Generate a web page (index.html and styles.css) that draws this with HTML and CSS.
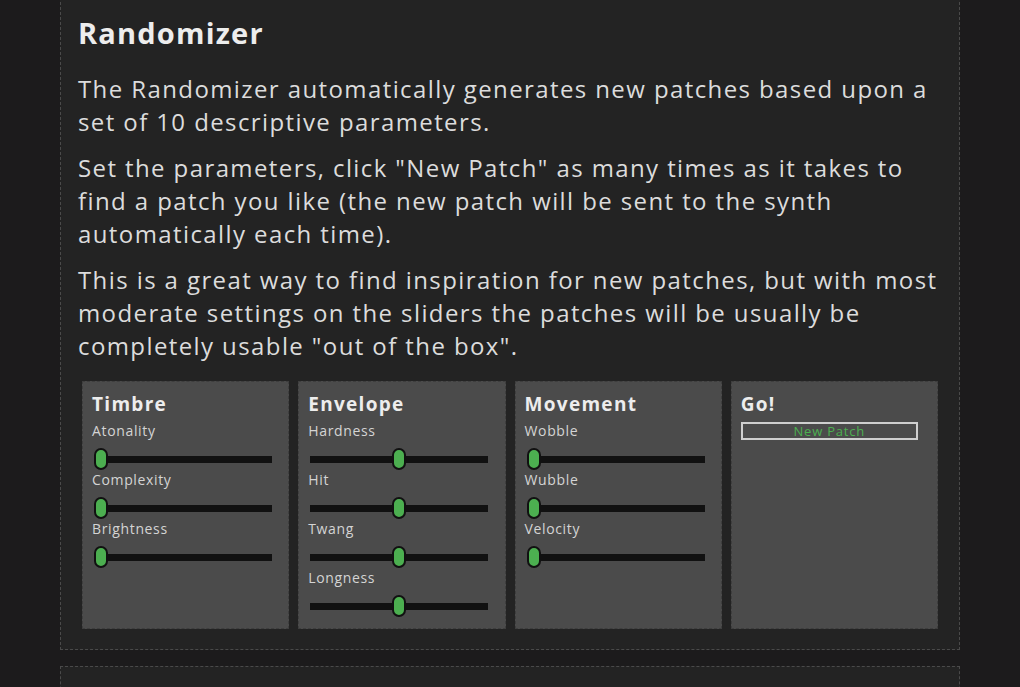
FILE: index.html
```html
<!doctype html>
<html>
<head>
    <meta charset="utf-8">
    <title>Randomizer</title>
    <link rel="stylesheet" href="styles.css">
</head>
<body>

<main class="page">
    <section class="card">
        <h2>Randomizer</h2>
        <p>The Randomizer automatically generates new patches based upon a set of 10 descriptive parameters.</p>
        <p>Set the parameters, click "New Patch" as many times as it takes to find a patch you like (the new patch will be sent to the synth automatically each time).</p>
        <p>This is a great way to find inspiration for new patches, but with most moderate settings on the sliders the patches will be usually be completely usable "out of the box".</p>

        <div class="panel-row">
            <div class="panel">
                <h3>Timbre</h3>
                <label>Atonality</label>
                <input type="range" min="0" max="100" value="0">
                <label>Complexity</label>
                <input type="range" min="0" max="100" value="0">
                <label>Brightness</label>
                <input type="range" min="0" max="100" value="0">
            </div>
            <div class="panel">
                <h3>Envelope</h3>
                <label>Hardness</label>
                <input type="range" min="0" max="100" value="50">
                <label>Hit</label>
                <input type="range" min="0" max="100" value="50">
                <label>Twang</label>
                <input type="range" min="0" max="100" value="50">
                <label>Longness</label>
                <input type="range" min="0" max="100" value="50">
            </div>
            <div class="panel">
                <h3>Movement</h3>
                <label>Wobble</label>
                <input type="range" min="0" max="100" value="0">
                <label>Wubble</label>
                <input type="range" min="0" max="100" value="0">
                <label>Velocity</label>
                <input type="range" min="0" max="100" value="0">
            </div>
            <div class="panel">
                <h3>Go!</h3>
                <button class="go-button">New Patch</button>
            </div>
        </div>
    </section>

    <section class="card"></section>
</main>

</body>
</html>
```

FILE: styles.css
```css
body {
    margin: 0;
    background-color: #1c1b1c;
    font-family: "Open Sans", sans-serif;
    color: #dcdcdc;
}

.page {
    width: 900px;
    margin: 0 auto;
}

.card {
    box-sizing: border-box;
    background-color: #232323;
    border: 1px dashed #4a4a4a;
    padding: 18px 17px 20px 17px;
    margin-top: -3px;
    margin-bottom: 19px; /* gap to the next card */
    min-height: 80px;
}

h2 {
    margin: 0 0 22px 0;
    font-size: 29px;
    line-height: 34px;
    font-weight: bold;
    letter-spacing: 1.2px;
    color: #ededed;
}

p {
    margin: 0 0 13px 0;
    font-size: 24px;
    line-height: 33px;
    letter-spacing: 1.4px;
}

.panel-row {
    display: grid;
    grid-template-columns: repeat(4, 1fr);
    gap: 9px;
    margin: 19px 4px 0 4px;
}

.panel {
    background-color: #4b4b4b;
    border: 1px dashed #3e3e3e;
    padding: 10px 9px 10px 9px;
}

h3 {
    margin: 0 0 6px 0;
    font-size: 19px;
    line-height: 24px;
    font-weight: bold;
    letter-spacing: 1.3px;
    color: #ededed;
}

label {
    display: block;
    font-size: 14px;
    line-height: 18px;
    letter-spacing: 0.65px;
    color: #d4d4d4;
}

input[type=range] {
    -webkit-appearance: none;
    appearance: none;
    display: block;
    width: 178px;
    height: 22px;
    margin: 8px 0 1px 2px;
    background: transparent;
}

input[type=range]::-webkit-slider-runnable-track {
    height: 7px;
    background-color: #111111;
}

input[type=range]::-webkit-slider-thumb {
    -webkit-appearance: none;
    box-sizing: border-box;
    width: 14px;
    height: 22px;
    margin-top: -7.5px;
    border-radius: 7px;
    border: 2px solid #111111;
    background-color: #4caf50;
}

.go-button {
    display: block;
    box-sizing: border-box;
    width: 177px;
    height: 18px;
    padding: 0;
    border: 2px solid #cfcfcf;
    background: transparent;
    color: #4caf50;
    font-family: "Open Sans", sans-serif;
    font-size: 13px;
    line-height: 14px;
    letter-spacing: 0.8px;
}
```
